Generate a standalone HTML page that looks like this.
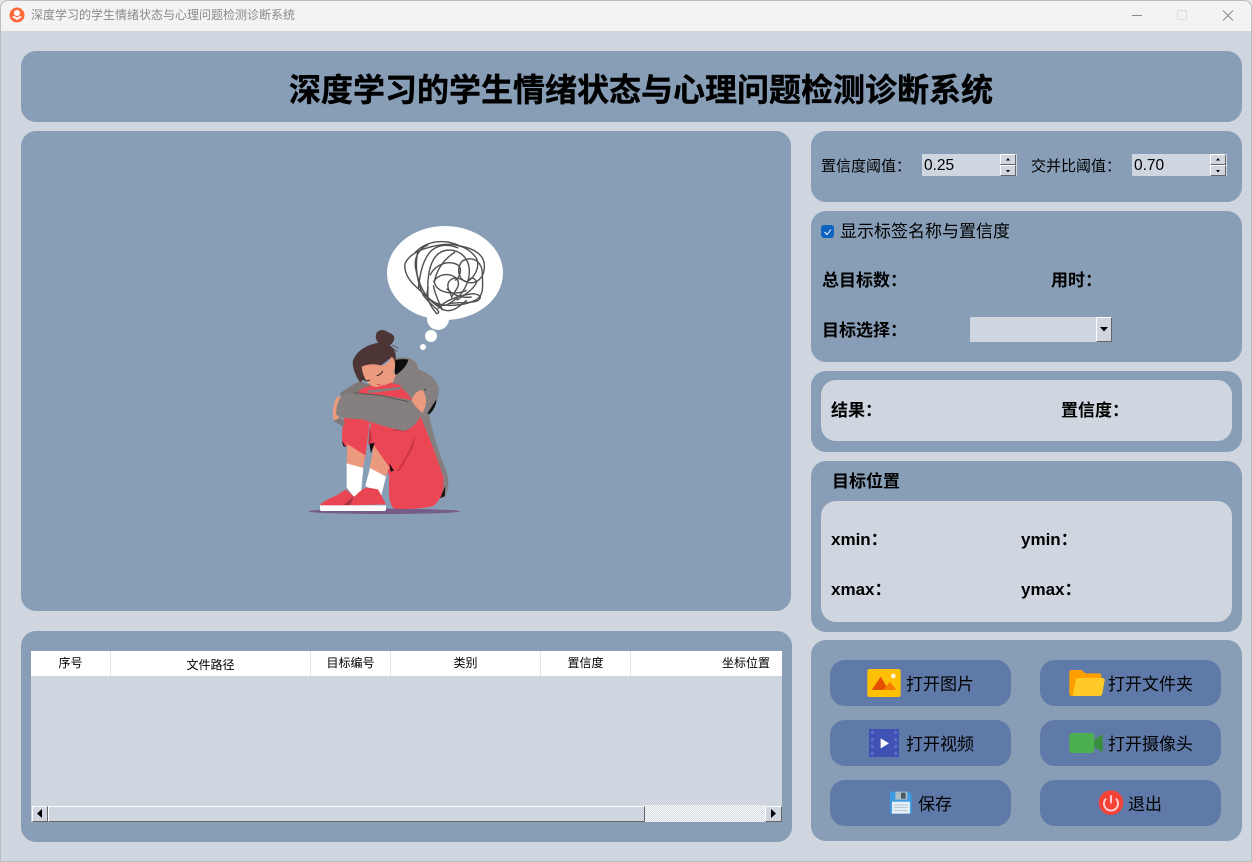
<!DOCTYPE html>
<html lang="zh">
<head>
<meta charset="utf-8">
<title>深度学习的学生情绪状态与心理问题检测诊断系统</title>
<style>
html,body{margin:0;padding:0;width:1252px;height:862px;overflow:hidden;background:#e6e6e6}
body{font-family:"Liberation Sans","Noto Sans CJK SC",sans-serif;color:#000}
#win{position:absolute;left:0;top:0;width:1252px;height:862px;background:#cfd6e0;border-radius:8px 8px 0 0;overflow:hidden;box-shadow:inset 0 0 0 1px #bdbdbd}
#bar{position:absolute;left:1px;top:1px;width:1250px;height:30px;background:#f3f3f3;border-radius:7px 7px 0 0}
.p{position:absolute;background:#889eb6;border-radius:15px}
.i{position:absolute;background:#cfd6e0;border-radius:15px}
.b{position:absolute;background:#5f7aa8;border-radius:15px;width:181px;height:46px}
.t{position:absolute;white-space:nowrap;line-height:24px;height:24px}
.l14{font-size:15px}.l16b{font-size:17px;font-weight:bold}.btn{font-size:17px}
.h{font-size:12px;position:absolute;top:651px;height:24px;line-height:24px;text-align:center;white-space:nowrap}
.sep{position:absolute;top:651px;width:1px;height:25px;background:#e3e3e3}
.spin{position:absolute;width:95px;height:22px;top:154px;background:#cfd6e0;font-size:15.5px;line-height:23px;text-indent:2px}
.sb{position:absolute;left:78px;top:0;width:16px;height:11px;background:#cfd6e0;box-sizing:border-box;border:1px solid;border-color:#fff #666 #666 #fff}
.r{position:absolute;box-sizing:border-box;background:#cfd6e0;border:1px solid;border-color:#fff #666 #666 #fff}
svg{position:absolute;left:0;top:0}
</style>
</head>
<body>
<div id="win">
<div id="bar"></div>
<div class="t" style="left:31px;top:3px;font-size:12px;color:#8a8a8a">深度学习的学生情绪状态与心理问题检测诊断系统</div>

<div class="p" style="left:21px;top:51px;width:1221px;height:71px"></div>
<div class="p" style="left:21px;top:131px;width:770px;height:480px"></div>
<div class="p" style="left:21px;top:631px;width:771px;height:211px"></div>
<div class="p" style="left:811px;top:131px;width:431px;height:71px"></div>
<div class="p" style="left:811px;top:211px;width:431px;height:151px"></div>
<div class="p" style="left:811px;top:371px;width:431px;height:81px"></div>
<div class="p" style="left:811px;top:461px;width:431px;height:171px"></div>
<div class="p" style="left:811px;top:640px;width:431px;height:201px"></div>
<div class="i" style="left:821px;top:380px;width:411px;height:61px"></div>
<div class="i" style="left:821px;top:501px;width:411px;height:121px"></div>

<div class="t" style="left:289px;top:71px;height:38px;line-height:38px;font-size:32px;font-weight:bold;-webkit-text-stroke:.4px #000">深度学习的学生情绪状态与心理问题检测诊断系统</div>

<div class="t l14" style="left:821px;top:155px">置信度阈值：</div>
<div class="t l14" style="left:1031px;top:155px">交并比阈值：</div>
<div class="spin" style="left:922px">0.25<div class="sb"></div><div class="sb" style="top:11px"></div></div>
<div class="spin" style="left:1132px">0.70<div class="sb"></div><div class="sb" style="top:11px"></div></div>

<div style="position:absolute;left:821px;top:225px;width:13px;height:13px;background:#0f62c0;border-radius:3px"></div>
<div class="t" style="left:840px;top:220px;font-size:17px">显示标签名称与置信度</div>
<div class="t l16b" style="left:822px;top:269px">总目标数：</div>
<div class="t l16b" style="left:1051px;top:269px">用时：</div>
<div class="t l16b" style="left:822px;top:319px">目标选择：</div>
<div style="position:absolute;left:970px;top:317px;width:142px;height:25px;background:#cfd6e0"></div>
<div class="r" style="left:1096px;top:317px;width:16px;height:25px"></div>
<div class="t l16b" style="left:831px;top:399px">结果：</div>
<div class="t l16b" style="left:1061px;top:399px">置信度：</div>
<div class="t l16b" style="left:832px;top:470px">目标位置</div>
<div class="t l16b" style="left:831px;top:528px">xmin：</div>
<div class="t l16b" style="left:1021px;top:528px">ymin：</div>
<div class="t l16b" style="left:831px;top:578px">xmax：</div>
<div class="t l16b" style="left:1021px;top:578px">ymax：</div>

<div style="position:absolute;left:31px;top:651px;width:751px;height:171px;background:#cfd6e0"></div>
<div style="position:absolute;left:31px;top:651px;width:751px;height:25px;background:#fff"></div>
<div class="sep" style="left:110px"></div><div class="sep" style="left:310px"></div><div class="sep" style="left:390px"></div><div class="sep" style="left:540px"></div><div class="sep" style="left:630px"></div>
<div class="h" style="left:31px;width:79px">序号</div>
<div class="h" style="left:111px;width:199px;top:653px">文件路径</div>
<div class="h" style="left:311px;width:79px">目标编号</div>
<div class="h" style="left:391px;width:149px">类别</div>
<div class="h" style="left:541px;width:89px">置信度</div>
<div class="h" style="left:722px;width:48px">坐标位置</div>

<div style="position:absolute;left:645px;top:805px;width:120px;height:17px;background:repeating-conic-gradient(#cfd6e0 0 25%,#fff 0 50%) 0 0/2px 2px"></div>
<div class="r" style="left:32px;top:806px;width:16px;height:16px"></div>
<div class="r" style="left:48px;top:806px;width:597px;height:16px"></div>
<div class="r" style="left:765px;top:806px;width:17px;height:16px"></div>

<div class="b" style="left:830px;top:660px"></div><div class="b" style="left:1040px;top:660px"></div>
<div class="b" style="left:830px;top:720px"></div><div class="b" style="left:1040px;top:720px"></div>
<div class="b" style="left:830px;top:780px"></div><div class="b" style="left:1040px;top:780px"></div>
<div class="t btn" style="left:906px;top:673px">打开图片</div>
<div class="t btn" style="left:1108px;top:673px">打开文件夹</div>
<div class="t btn" style="left:906px;top:733px">打开视频</div>
<div class="t btn" style="left:1108px;top:733px">打开摄像头</div>
<div class="t btn" style="left:918px;top:793px">保存</div>
<div class="t btn" style="left:1128px;top:793px">退出</div>

<svg width="1252" height="862" viewBox="0 0 1252 862" xmlns="http://www.w3.org/2000/svg">
  <!-- app icon -->
  <circle cx="17" cy="15" r="7.5" fill="#ff6a3c"/>
  <circle cx="17" cy="13" r="3" fill="#fff"/>
  <path d="M12 17 L17 20 L22 17 L20 16 L17 17.5 L14 16Z" fill="#fff"/>
  <!-- window buttons -->
  <path d="M1132 15.5H1142" stroke="#8a8a8a" stroke-width="1"/>
  <rect x="1177.5" y="10.5" width="9" height="9" fill="none" stroke="#dcdcdc" rx="1"/>
  <path d="M1223 10.5L1233 20.5M1233 10.5L1223 20.5" stroke="#8a8a8a" stroke-width="1"/>
  <!-- checkbox tick -->
  <path d="M824.5 232L827 234.5L831 229.5" fill="none" stroke="#fff" stroke-width="1"/>
  <!-- spin arrows -->
  <path d="M1006 160.5h4l-2-2.500zM1006 170h4l-2 2.500zM1216 160.500h4l-2-2.500zM1216 170h4l-2 2.500z" fill="#000"/>
  <!-- combo arrow -->
  <path d="M1100 327h8l-4 4.500z" fill="#000"/>
  <!-- scroll arrows -->
  <path d="M42 809v9l-5-4.500z" fill="#000"/>
  <path d="M771 809v9l5-4.500z" fill="#000"/>

  <!-- thought bubble -->
  <ellipse cx="445" cy="273" rx="58" ry="47" fill="#fff"/>
  <circle cx="438" cy="319" r="11" fill="#fff"/>
  <circle cx="431" cy="336" r="6" fill="#fff"/>
  <circle cx="423" cy="347" r="3" fill="#fff"/>
  <!-- scribble -->
  <g transform="translate(395 232) scale(.33333)" fill="none" stroke="#505050" stroke-width="4.2">
    <path d="M60 62C95 25 150 20 195 42C240 50 268 70 268 100C270 135 245 160 215 150C185 140 185 100 205 85C240 70 262 95 262 125C262 160 270 190 240 205C205 222 150 225 120 212C85 195 70 150 62 110C56 80 70 50 100 38"/>
    <path d="M30 95C45 60 95 45 140 38C190 32 225 50 245 80C255 105 240 135 218 148M30 95C26 125 45 150 75 175C100 200 125 225 150 235C175 240 190 225 215 205"/>
    <path d="M100 210C95 150 100 90 130 65C165 40 215 60 222 105C228 145 205 190 170 210C150 225 125 225 110 205"/>
    <path d="M115 150C130 125 165 120 185 140C200 160 180 175 170 195C165 180 150 160 165 145C180 130 205 145 215 150C230 130 240 140 245 150"/>
    <path d="M105 130C125 90 170 85 190 100C205 115 190 140 180 145M128 230C150 205 190 190 235 185C255 188 262 195 250 205C230 215 190 210 160 215"/>
    <path d="M70 170C75 120 85 80 110 55C135 35 165 38 190 48"/>
    <path d="M115 160C120 190 135 215 142 235"/>
    <path d="M68 60C60 100 65 150 85 190C110 225 145 240 125 245C100 215 90 190 100 165"/>
    <path d="M180 60C150 80 125 110 118 150C125 185 180 190 215 175"/>
    <path d="M185 205C205 190 235 175 245 150M155 170C170 185 195 200 230 195"/>
  </g>

  <!-- girl lower body (z4 coords) -->
  <g transform="translate(300 370) scale(.33333)">
    <ellipse cx="253" cy="424" rx="227" ry="8" fill="#755c8b"/>
    <!-- back of hoodie -->
    <path d="M360 0Q410 20 415 55Q415 95 385 125Q405 220 432 285Q458 340 432 385L380 330L300 150L270 0Z" fill="#85807f"/>
    <path d="M420 385L436 348L434 378Z" fill="#111"/>
    <!-- dress -->
    <path d="M170 65Q200 30 250 45L305 40L330 90L362 140Q400 230 430 320Q436 380 400 408Q350 420 282 416Q262 400 268 320L215 170Z" fill="#eb4654"/>
    <path d="M135 120Q122 195 128 225L145 232L195 270L212 130Z" fill="#eb4654"/>
    <path d="M214 130L208 222L270 312L345 200L362 140Z" fill="#eb4654"/>
    <path d="M270 182L320 185L360 140L330 170Z" fill="#c93341"/>
    <path d="M288 310L328 240L345 198L340 230L300 300Z" fill="#c93341"/>
    <path d="M208 170L216 205L212 225L205 222Z" fill="#c93341"/>
    <!-- cuffs -->
    <path d="M126 212L130 228L138 232Z M208 222L224 218L213 250Z M268 280L282 302L272 305Z" fill="#111"/>
    <!-- shins -->
    <path d="M142 222L196 256L188 300L140 285Z" fill="#ec9a7e"/>
    <path d="M222 226L268 292L258 318L208 298Z" fill="#ec9a7e"/>
    <!-- socks -->
    <path d="M140 280L190 294L182 380L160 378L140 352Z" fill="#fff"/>
    <path d="M210 294L258 320L244 376L196 348Z" fill="#fff"/>
    <!-- shoes -->
    <path d="M60 406Q66 394 110 376L138 358L162 380L148 406Z" fill="#ea4552"/>
    <path d="M148 406Q165 368 200 352L234 358L246 380L258 403Z" fill="#ea4552"/>
    <path d="M130 405L162 380L150 405Z" fill="#a93040"/>
    <path d="M60 406H258V418Q258 423 250 423H66Q60 423 60 418Z" fill="#fff"/>
    <!-- left hand -->
    <path d="M110 82Q94 112 100 148L116 156L120 100L132 76Z" fill="#ec9a7e"/>
  </g>

  <!-- girl upper body (z11 coords) -->
  <g transform="translate(340 325) scale(.33333)">
    <!-- hood -->
    <path d="M150 105Q200 85 228 112L240 145Q290 160 297 190Q295 235 265 265L245 262L180 185L150 150Z" fill="#85807f"/>
    <path d="M165 105Q185 100 205 104Q200 128 165 152Z" fill="#0d0d0d"/>
    <path d="M262 265L290 222Q288 250 268 268Z" fill="#111"/>
    <path d="M232 190L258 196L252 186Z" fill="#111"/>
    <!-- left sleeve -->
    <path d="M0 205Q25 185 60 168L95 182L60 208L5 218Z" fill="#7e7978"/>
    <path d="M-20 288L0 278L15 290L10 305Z" fill="#7e7978"/>
    <!-- knee / collar -->
    <path d="M50 205Q80 172 118 190L150 172L186 182L220 230L60 215Z" fill="#eb4654"/>
    <!-- shoulder -->
    <path d="M180 185Q200 160 240 145L262 180L230 230Z" fill="#85807f"/>
    <!-- forearm -->
    <path d="M5 212L40 203L125 210L215 225L248 262Q225 312 190 318Q130 305 70 284L0 278L-12 268Q-12 235 5 212Z" fill="#85807f"/>
    <path d="M40 203L125 212L205 230" fill="none" stroke="#5c5857" stroke-width="3"/>
    <path d="M85 200L180 190" fill="none" stroke="#85807f" stroke-width="8"/>
    <path d="M215 228Q220 200 248 195Q268 225 248 264Q228 248 215 228Z" fill="#ec9a7e"/>
    <!-- neck -->
    <path d="M150 130L168 150L160 170L130 182Z" fill="#ec9a7e"/>
    <!-- hair -->
    <path d="M110 22Q125 8 145 22Q170 30 160 50Q150 68 125 62Q100 45 110 22Z" fill="#4c3534"/>
    <path d="M38 110Q50 70 105 55Q140 48 160 70Q172 90 165 115L150 100L60 172Q38 140 38 110Z" fill="#4c3534"/>
    <!-- face -->
    <path d="M65 125Q95 112 125 122Q145 118 155 95Q167 105 165 125Q160 150 140 170Q120 190 100 185Q70 170 65 125Z" fill="#ec9a7e"/>
    <path d="M155 60L175 70M152 66L172 80M148 72L162 86" stroke="#4c3534" stroke-width="2" fill="none"/>
    <path d="M68 158Q78 172 90 165M110 152Q122 150 128 138" stroke="#2a1d1d" stroke-width="3" fill="none"/>
    <path d="M110 176Q116 182 122 177" stroke="#d8524f" stroke-width="3" fill="none"/>
  </g>

  <!-- button icons (zoom space) -->
  <g transform="translate(810 650) scale(.33333)">
    <rect x="172" y="57" width="100" height="84" rx="7" fill="#ffc107"/>
    <path d="M185 120L212 80L236 120Z" fill="#e65100"/>
    <path d="M220 120L240 95L259 120Z" fill="#f57c00"/>
    <circle cx="250" cy="78" r="7" fill="#fff8e1"/>

    <path d="M778 68Q778 60 786 60H815L826 70H866Q874 70 874 78V130Q874 138 866 138H786Q778 138 778 130Z" fill="#ffa000"/>
    <path d="M797 92Q798 84 806 84H876Q885 84 884 92L877 130Q876 138 868 138H788Z" fill="#ffca28"/>

    <rect x="177" y="237" width="90" height="84" fill="#3f51b5"/>
    <path d="M183 243h9v9h-9zM183 264h9v9h-9zM183 285h9v9h-9zM183 306h9v9h-9zM252 243h9v9h-9zM252 264h9v9h-9zM252 285h9v9h-9zM252 306h9v9h-9z" fill="#5c6bc0"/>
    <path d="M212 265L237 280L212 295Z" fill="#fff"/>

    <rect x="778" y="249" width="75" height="60" rx="8" fill="#4caf50"/>
    <path d="M853 270L878 252V308L853 290Z" fill="#388e3c"/>

    <path d="M240 425H296L305 434V491H240Z" fill="#3d9ae0"/>
    <rect x="256" y="425" width="36" height="24" fill="#b0bec5"/>
    <rect x="273" y="428" width="14" height="18" fill="#455a64"/>
    <rect x="246" y="455" width="54" height="36" fill="#e3eef7"/>
    <path d="M252 465h42M252 473h42M252 481h42" stroke="#9fb4c4" stroke-width="2"/>

    <circle cx="903" cy="458" r="37" fill="#f44336"/>
    <path d="M888 446A21 21 0 1 0 918 446" fill="none" stroke="#ffcdd2" stroke-width="6"/>
    <path d="M903 436V460" stroke="#ffcdd2" stroke-width="6"/>
  </g>
</svg>
</div>
</body>
</html>
